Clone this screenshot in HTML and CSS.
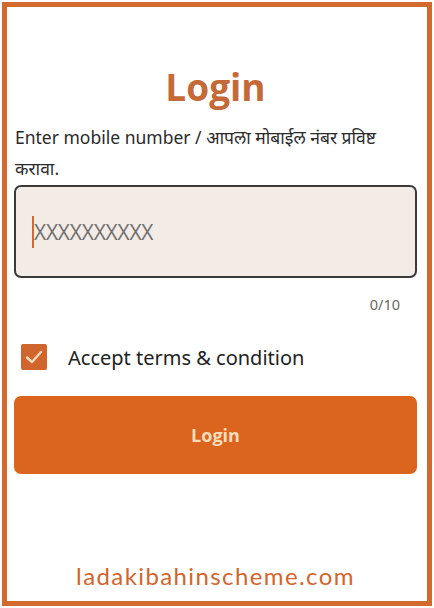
FILE: index.html
```html
<!DOCTYPE html>
<html lang="mr">
<head>
<meta charset="utf-8">
<title>Login</title>
<link rel="stylesheet" href="styles.css">
</head>
<body>
<div class="frame">
  <h1 class="title">Login</h1>
  <p class="label">Enter mobile number / आपला मोबाईल नंबर प्रविष्ट करावा.</p>
  <div class="field">
    <span class="cursor"></span>
    <span class="placeholder">XXXXXXXXXX</span>
  </div>
  <div class="counter">0/10</div>
  <div class="terms">
    <span class="check">
      <svg viewBox="0 0 26 26" width="26" height="26"><path d="M6 13.5 L11 18 L20 8" fill="none" stroke="#f7d9b8" stroke-width="2.4" stroke-linecap="round" stroke-linejoin="round"/></svg>
    </span>
    <span class="terms-text">Accept terms &amp; condition</span>
  </div>
  <button class="btn">Login</button>
  <div class="spacer"></div>
  <div class="footer">ladakibahinscheme.com</div>
</div>
</body>
</html>
```
FILE: styles.css
```css
html, body {
  margin: 0;
  padding: 0;
  background: #ffffff;
}
body {
  width: 434px;
  height: 608px;
  overflow: hidden;
  font-family: "Noto Sans", "Open Sans", sans-serif;
}
.frame {
  box-sizing: border-box;
  margin: 2px;
  width: 430px;
  height: 604px;
  border: 5px solid #d2692f;
  padding: 0 10px 0 7px;
  display: flex;
  flex-direction: column;
}
.title {
  margin: 56px 0 0;
  text-align: center;
  font-family: "Open Sans", sans-serif;
  font-weight: 700;
  font-size: 37px;
  line-height: 48px;
  color: #c46a38;
}
.label {
  margin: 11px 0 0 1px;
  font-size: 17.5px;
  line-height: 31px;
  color: #2a2a2a;
}
.field {
  margin-top: 1px;
  box-sizing: border-box;
  height: 93px;
  border: 2px solid #3a3a3a;
  border-radius: 7px;
  background: #f3ebe6;
  display: flex;
  align-items: center;
  padding-left: 16px;
}
.cursor {
  width: 2px;
  height: 32px;
  background: #d2692f;
  margin-right: 0;
}
.placeholder {
  font-family: "Open Sans", sans-serif;
  font-size: 21px;
  color: #6f6f6f;
  letter-spacing: -0.2px;
}
.counter {
  margin-top: 16px;
  text-align: right;
  padding-right: 17px;
  font-size: 14.5px;
  line-height: 20px;
  color: #666666;
}
.terms {
  margin-top: 28px;
  display: flex;
  align-items: center;
  padding-left: 7px;
  height: 30px;
}
.check {
  width: 26px;
  height: 26px;
  border-radius: 2px;
  background: #d0652d;
  display: flex;
}
.terms-text {
  margin-left: 21px;
  font-size: 20px;
  color: #222222;
}
.btn {
  margin-top: 24px;
  height: 78px;
  border: none;
  border-radius: 7px;
  background: #db641f;
  color: #f6dcb9;
  font-family: "Open Sans", sans-serif;
  font-weight: 700;
  font-size: 18px;
  width: 100%;
}
.spacer {
  flex: 1;
}
.footer {
  margin-bottom: 10px;
  text-align: center;
  font-family: "Lato", sans-serif;
  font-size: 24px;
  line-height: 30px;
  color: #d0652d;
  letter-spacing: 1.4px;
}
```
